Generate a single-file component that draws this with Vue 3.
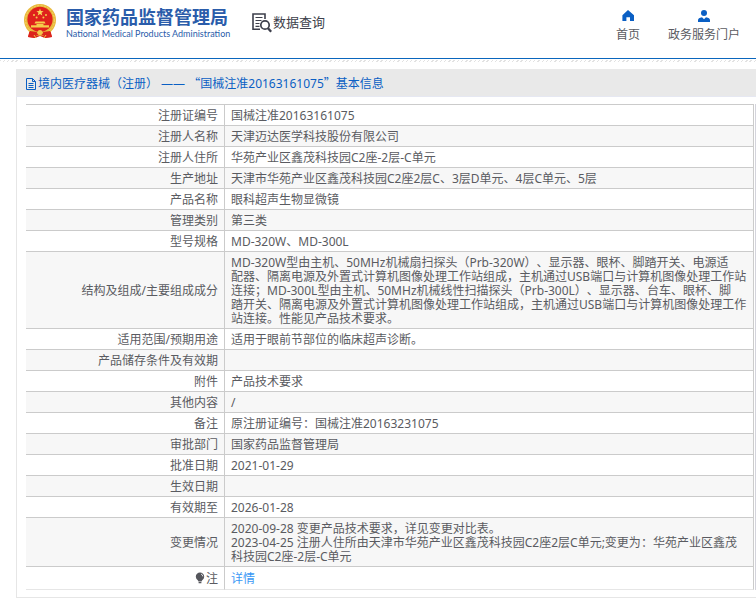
<script setup>
const rows = [
  { label: '注册证编号', value: '国械注准20163161075' },
  { label: '注册人名称', value: '天津迈达医学科技股份有限公司' },
  { label: '注册人住所', value: '华苑产业区鑫茂科技园C2座-2层-C单元' },
  { label: '生产地址', value: '天津市华苑产业区鑫茂科技园C2座2层C、3层D单元、4层C单元、5层' },
  { label: '产品名称', value: '眼科超声生物显微镜' },
  { label: '管理类别', value: '第三类' },
  { label: '型号规格', value: 'MD-320W、MD-300L' },
  {
    label: '结构及组成/主要组成成分',
    value: [
      'MD-320W型由主机、50MHz机械扇扫探头（Prb-320W）、显示器、眼杯、脚踏开关、电源适',
      '配器、隔离电源及外置式计算机图像处理工作站组成，主机通过USB端口与计算机图像处理工作站',
      '连接；MD-300L型由主机、50MHz机械线性扫描探头（Prb-300L）、显示器、台车、眼杯、脚',
      '踏开关、隔离电源及外置式计算机图像处理工作站组成，主机通过USB端口与计算机图像处理工作',
      '站连接。性能见产品技术要求。',
    ].join('\n'),
  },
  { label: '适用范围/预期用途', value: '适用于眼前节部位的临床超声诊断。' },
  { label: '产品储存条件及有效期', value: '' },
  { label: '附件', value: '产品技术要求' },
  { label: '其他内容', value: '/' },
  { label: '备注', value: '原注册证编号：国械注准20163231075' },
  { label: '审批部门', value: '国家药品监督管理局' },
  { label: '批准日期', value: '2021-01-29' },
  { label: '生效日期', value: '' },
  { label: '有效期至', value: '2026-01-28' },
  {
    label: '变更情况',
    value: [
      '2020-09-28 变更产品技术要求，详见变更对比表。',
      '2023-04-25 注册人住所由天津市华苑产业区鑫茂科技园C2座2层C单元;变更为：华苑产业区鑫茂',
      '科技园C2座-2层-C单元',
    ].join('\n'),
  },
];
</script>

<template>
  <div class="page">
    <header class="header">
      <a class="brand" href="#">
        <svg class="emblem" viewBox="0 0 32 35" aria-hidden="true">
          <path d="M6 25 L26 25 L28 33 L21 34 L16 32 L11 34 L4 33 Z" fill="#d8201c" />
          <circle cx="16" cy="16" r="16" fill="#e9b93c" />
          <circle cx="16" cy="16" r="14.4" fill="none" stroke="#f6d568" stroke-width="1" stroke-dasharray="2 1.4" />
          <circle cx="16" cy="15.4" r="12.6" fill="#df211c" />
          <path d="M16 4.6 l.9 2.5 2.7.1 -2.1 1.6 .8 2.6 -2.3-1.5 -2.3 1.5 .8-2.6 -2.1-1.6 2.7-.1z" fill="#f8d85a" />
          <g fill="#f5cd4b">
            <circle cx="10" cy="11" r="1" />
            <circle cx="22" cy="11" r="1" />
            <circle cx="12.6" cy="13.6" r="1" />
            <circle cx="19.4" cy="13.6" r="1" />
            <path d="M11.5 17.5h9l1 2h-11z M12.5 20h7v1.2h-7z M7 21.2h18v2.4H7z" />
          </g>
          <path d="M6 27 L13 28 L12 34 L4 33 Z M26 27 L19 28 L20 34 L28 33 Z" fill="#dc241d" />
          <path d="M9 28 Q16 31 23 28 L22 30 Q16 33 10 30 Z" fill="#dc241d" />
          <circle cx="16" cy="28.6" r="2.6" fill="#f1c84c" />
          <path d="M10 31 L12 34 M22 31 L20 34" stroke="#f1c84c" />
        </svg>
        <span class="brand-text">
          <span class="brand-name">国家药品监督管理局</span>
          <span class="brand-sub">National Medical Products Administration</span>
        </span>
      </a>
      <a class="query" href="#">
        <svg viewBox="0 0 20 20" aria-hidden="true" fill="none" stroke="#3d3f4b">
          <path d="M8 16.2 H1 V1 H13 V6" stroke-width="1.6" />
          <path d="M3.5 4.5h7 M3.5 7.5h6 M3.5 10.5h4 M3.5 13.3h4" stroke-width="1.2" />
          <circle cx="13" cy="12" r="4.2" stroke-width="1.7" />
          <path d="M16 15.2 L19.2 18.8" stroke-width="2.4" />
        </svg>
        <span>数据查询</span>
      </a>
      <nav class="nav">
        <a href="#">
          <svg viewBox="0 0 12 12" aria-hidden="true">
            <path d="M6 0 L12 5.2 V11 H8 V7.2 H4.4 V11 H0.4 V5.2 Z" fill="#0a5fc4" />
          </svg>
          <span>首页</span>
        </a>
        <a href="#">
          <svg viewBox="0 0 12 12" aria-hidden="true" fill="#0a5fc4">
            <circle cx="6" cy="3" r="3" />
            <path d="M0 12 V10 Q0 8 4 7.2 L6 9.2 L8 7.2 Q12 8 12 10 V12 Z" />
          </svg>
          <span>政务服务门户</span>
        </a>
      </nav>
    </header>

    <main class="panel">
      <h1 class="panel-title">
        <svg viewBox="0 0 10 12" aria-hidden="true" fill="none" stroke="#0a5fc4">
          <path d="M.5 .5 H6.5 L9.5 3.5 V11.5 H.5 Z M6.5 .5 V3.5 H9.5 M2.5 5.5H7.5 M2.5 7.5H7.5 M2.5 9.5H7.5" />
        </svg>
        <span>境内医疗器械（注册） —— <span class="quote">“</span>国械注准20163161075<span class="quote">”</span>基本信息</span>
      </h1>
      <div class="panel-body">
        <table class="info">
          <tbody>
            <tr v-for="row in rows" :key="row.label">
              <th scope="row">{{ row.label }}</th>
              <td>{{ row.value }}</td>
            </tr>
            <tr class="note">
              <th scope="row">
                <svg viewBox="0 0 10 12" aria-hidden="true">
                  <path d="M5 .5 A4.2 4.2 0 0 1 9.2 4.7 Q9.2 6.6 7 8.6 L6.6 9.4 H3.4 L3 8.6 Q.8 6.6 .8 4.7 A4.2 4.2 0 0 1 5 .5 Z M3.6 10 H6.4 V11.2 H3.6 Z" fill="#55565c" />
                  <path d="M6 2 Q7.6 2.6 7.8 4.4" fill="none" stroke="#fff" stroke-width=".8" />
                </svg>注</th>
              <td><a href="#">详情</a></td>
            </tr>
          </tbody>
        </table>
      </div>
    </main>
  </div>
</template>

<style>
body {
  margin: 0;
  background: #fff;
}
</style>

<style scoped>
.page {
  font-family: "Noto Sans", "Noto Sans CJK SC", sans-serif;
  font-size: 12px;
  line-height: 14px;
  color: #5a5b61;
  text-spacing-trim: space-all;
}

a {
  color: inherit;
  text-decoration: none;
}

.header {
  display: flex;
  align-items: flex-start;
  height: 58px;
  padding: 0 16px 0 24px;
  border-bottom: 1px solid #0a66bd;
}

.header::after {
  content: "";
  position: absolute;
  top: 60px;
  left: 0;
  right: 0;
  height: 2px;
  background: repeating-linear-gradient(135deg, #e2e2e2 0 1px, #fff 1px 3px);
}

.brand {
  display: flex;
  gap: 10px;
  padding-top: 4px;
}

.emblem {
  width: 32px;
  height: 35px;
}

.brand-text {
  display: flex;
  flex-direction: column;
  width: 162px;
  padding-top: 2px;
  color: #2a5caa;
  white-space: nowrap;
}

.brand-name {
  font-size: 18px;
  line-height: 22px;
  font-weight: 700;
}

.brand-sub {
  font-family: Lato, "Liberation Sans", sans-serif;
  font-size: 9px;
  line-height: 12px;
}

.query {
  display: flex;
  gap: 1px;
  margin-left: 24px;
  padding-top: 13px;
  font-size: 13px;
  line-height: 18px;
  color: #3d3f4b;
}

.query svg {
  width: 20px;
  height: 20px;
}

.nav {
  display: flex;
  gap: 28px;
  margin-left: auto;
  padding-top: 10px;
}

.nav a {
  display: flex;
  flex-direction: column;
  align-items: center;
  gap: 6px;
}

.nav svg {
  width: 12px;
  height: 12px;
}

.panel {
  margin: 10px 0 0 16px;
}

.panel-title {
  display: flex;
  align-items: center;
  gap: 2px;
  height: 25px;
  margin: 0;
  padding: 2px 0 0 10px;
  background: #e9e9e9;
  border-bottom: 1px solid #e6e8f2;
  font-size: 12px;
  font-weight: 400;
  color: #0a5fc4;
}

.panel-title svg {
  width: 10px;
  height: 12px;
}

.quote {
  font-family: "Noto Sans CJK SC", sans-serif;
}

.panel-body {
  padding: 7px 0 7px 9px;
  border-left: 1px solid #e6e6e6;
  border-bottom: 1px solid #e6e6e6;
}

.info {
  width: 100%;
  border-collapse: separate;
  border-spacing: 0;
  border-right: 1px solid #d4d4dc;
  padding-right: 1px;
}

.info th,
.info td {
  height: 14px;
  padding: 4px 6px 2px;
  border-top: 1px solid #cbcbcb;
  border-right: 1px solid #cbcbcb;
}

.info th {
  width: 186px;
  font-weight: 400;
  text-align: right;
}

.info td {
  white-space: pre-line;
}

.info tr:nth-child(even) {
  background: #f7f7f7;
}

.info .note {
  background: #fff;
}

.info .note th,
.info .note td {
  height: 16px;
  border-bottom: 1px solid #e6e6e6;
}

.note svg {
  width: 10px;
  height: 12px;
  margin-right: 1px;
  vertical-align: -1px;
}

.note a {
  color: #3a98f5;
}
</style>
